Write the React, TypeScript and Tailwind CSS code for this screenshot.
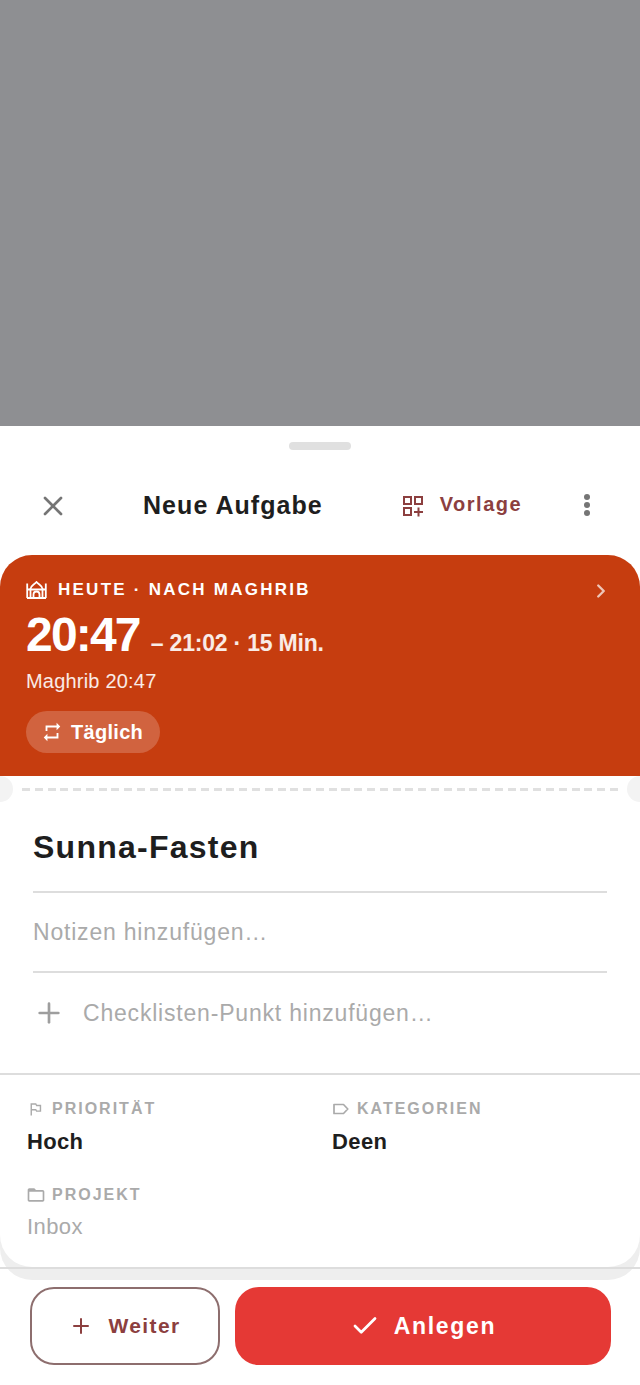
import { X, ChevronRight, Plus, Check } from 'lucide-react'

function TemplateIcon() {
  return (
    <svg width="22" height="22" viewBox="0 0 22 22" fill="none" stroke="#8c3f3f" strokeWidth="2">
      <rect x="2" y="2" width="7" height="7" />
      <rect x="13" y="2" width="7" height="7" />
      <rect x="2" y="13" width="7" height="7" />
      <path d="M16.500 12.500v9M12 17h9" />
    </svg>
  )
}

function MosqueIcon() {
  return (
    <svg width="21" height="18" viewBox="0 0 21 18" fill="none" stroke="white" strokeWidth="1.8">
      <path d="M1.200 17V2.500M19.800 17V2.500M1 17h19" />
      <path d="M1.200 8.500h3.300M16.500 8.500h3.300" />
      <path d="M4.500 17V8.500h12V17" />
      <path d="M4.500 8.500C4 4.800 8 4 10.500 1 13 4 17 4.800 16.500 8.500" />
      <path d="M7.500 17v-3.500a3 3 0 0 1 6 0V17" />
    </svg>
  )
}

function RepeatIcon() {
  return (
    <svg width="22" height="22" viewBox="0 0 24 24" fill="white">
      <path d="M7 7h10v3l4-4-4-4v3H5v6h2V7zm10 10H7v-3l-4 4 4 4v-3h12v-6h-2v4z" />
    </svg>
  )
}

function FlagIcon() {
  return (
    <svg width="18" height="18" viewBox="0 0 24 24" fill="#aaaaaa">
      <path d="M14 6l-1-2H5v17h2v-7h5l1 2h7V6h-6zm4 8h-4l-1-2H7V6h5l1 2h5v6z" />
    </svg>
  )
}

function FolderIcon() {
  return (
    <svg width="20" height="20" viewBox="0 0 24 24" fill="#aaaaaa" className="shrink-0">
      <path d="M20 6h-8l-2-2H4c-1.100 0-1.990.9-1.990 2L2 18c0 1.100.9 2 2 2h16c1.100 0 2-.9 2-2V8c0-1.100-.9-2-2-2zm0 12H4V8h16v10z" />
    </svg>
  )
}

function TagIcon() {
  return (
    <svg width="16" height="12" viewBox="0 0 16 12" fill="none" stroke="#aaaaaa" strokeWidth="1.7">
      <path d="M1 1.500h9.500L14.800 6l-4.300 4.500H1z" strokeLinejoin="round" />
    </svg>
  )
}

function DotsIcon() {
  return (
    <svg width="32" height="32" viewBox="0 0 32 32" fill="#757575">
      <circle cx="16" cy="8" r="3" />
      <circle cx="16" cy="16" r="3" />
      <circle cx="16" cy="24" r="3" />
    </svg>
  )
}

function MetaLabel({ icon, label }: { icon: React.ReactNode; label: string }) {
  return (
    <div className="flex items-center gap-[8px] h-[20px] text-[16px] font-bold tracking-[2px] text-[#aaaaaa]">
      <span className="w-[17px] flex justify-center">{icon}</span>
      {label}
    </div>
  )
}

export default function App() {
  return (
    <div className="h-[1385px] bg-white flex flex-col overflow-hidden font-['Liberation_Sans',Arial,sans-serif] text-[#1e1e1e]">
      <div className="h-[426px] shrink-0 bg-[#8e8f92]" />

      <div className="flex justify-center pt-[16px]">
        <div className="w-[62px] h-[8px] rounded-full bg-[#e0e0e0]" />
      </div>

      {/* Header */}
      <header className="h-[105px] flex items-center px-[37px] pt-[7px]">
        <X size={32} strokeWidth={2} className="text-[#757575]" />
        <h1 className="ml-[74px] text-[25px] font-bold tracking-[1.05px]">Neue Aufgabe</h1>
        <div className="ml-[79px] flex items-center">
          <TemplateIcon />
          <span className="ml-[16px] -mt-[4px] text-[20px] font-bold tracking-[1.5px] text-[#8c3f3f]">Vorlage</span>
        </div>
        <span className="ml-auto -mt-[2px]">
          <DotsIcon />
        </span>
      </header>

      {/* Time card */}
      <section className="h-[221px] shrink-0 rounded-t-[32px] bg-[#c63d0f] text-white pl-[26px] pr-[28px] pt-[23px]">
        <div className="flex items-center h-[24px]">
          <MosqueIcon />
          <span className="ml-[11px] text-[17px] font-bold tracking-[2.25px]">HEUTE · NACH MAGHRIB</span>
          <span className="ml-auto mt-[2px]">
            <ChevronRight size={22} strokeWidth={2.6} className="text-white/70" />
          </span>
        </div>
        <div className="flex items-baseline mt-[6px] h-[54px]">
          <span className="text-[48px] leading-[54px] font-bold tracking-[-1.8px]">20:47</span>
          <span className="ml-[11px] text-[23px] font-bold text-white/90 tracking-[-0.2px]">– 21:02 · 15 Min.</span>
        </div>
        <div className="mt-[5px] text-[20px] leading-[28px] text-white/90 tracking-[0.2px]">Maghrib 20:47</div>
        <div className="mt-[16px] inline-flex items-center h-[42px] rounded-full bg-white/20 pl-[15px] pr-[17px]">
          <RepeatIcon />
          <span className="ml-[8px] text-[20px] font-bold tracking-[0.3px]">Täglich</span>
        </div>
      </section>

      {/* Body card */}
      <div className="flex-1 min-h-0">
        <div className="bg-[#eeeeee] rounded-b-[32px] pb-[13px]">
          <div className="relative bg-white rounded-b-[32px] h-[491px]">
            <div className="absolute left-[-13px] top-[0px] w-[26px] h-[26px] rounded-full bg-[#f3f3f3]" />
            <div className="absolute right-[-13px] top-[0px] w-[26px] h-[26px] rounded-full bg-[#f3f3f3]" />

            <div className="mx-[22px] h-[26px] flex items-center">
              <div className="w-full h-[3px] bg-[repeating-linear-gradient(90deg,#e0e0e0_0_8px,transparent_8px_12.78px)]" />
            </div>

            <div className="px-[33px]">
              <div className="h-[91px] flex items-center border-b-2 border-[#dddddd] text-[32px] font-bold tracking-[1.25px]">
                Sunna-Fasten
              </div>
              <div className="h-[80px] flex items-center border-b-2 border-[#dddddd] text-[23px] tracking-[0.8px] text-[#aaaaaa]">
                Notizen hinzufügen…
              </div>
              <div className="h-[80px] flex items-center text-[23px] tracking-[0.8px] text-[#aaaaaa]">
                <Plus size={32} strokeWidth={2} className="text-[#9e9e9e]" />
                <span className="ml-[18px]">Checklisten-Punkt hinzufügen…</span>
              </div>
            </div>

            <div className="border-t-2 border-[#dddddd] mt-[20px] pl-[27px] pt-[24px] grid grid-cols-[305px_1fr] gap-y-[28px]">
              <div>
                <MetaLabel icon={<FlagIcon />} label="PRIORITÄT" />
                <div className="mt-[8px] text-[22px] leading-[30px] font-bold tracking-[0.3px]">Hoch</div>
              </div>
              <div>
                <MetaLabel icon={<TagIcon />} label="KATEGORIEN" />
                <div className="mt-[8px] text-[22px] leading-[30px] font-bold tracking-[0.4px]">Deen</div>
              </div>
              <div>
                <MetaLabel icon={<FolderIcon />} label="PROJEKT" />
                <div className="mt-[7px] text-[22px] leading-[30px] tracking-[0.4px] text-[#aaaaaa]">Inbox</div>
              </div>
            </div>

            {/* footer separator over the card's edge */}
            <div className="absolute left-0 right-0 bottom-[-2px] h-[2px] bg-[#dddddd]" />
          </div>
        </div>

        {/* Actions */}
        <div className="flex gap-[15px] pl-[30px] pr-[29px] pt-[7px]">
          <button className="w-[190px] h-[78px] flex items-center justify-center rounded-[24px] border-2 border-[#8d6e6e] bg-white text-[#8c3f3f]">
            <Plus size={24} strokeWidth={2} />
            <span className="ml-[15px] text-[21px] font-bold tracking-[1.4px]">Weiter</span>
          </button>
          <button className="flex-1 h-[78px] flex items-center justify-center rounded-[24px] bg-[#e53935] text-white">
            <Check size={30} strokeWidth={2.2} />
            <span className="ml-[14px] text-[23px] font-bold tracking-[1.7px]">Anlegen</span>
          </button>
        </div>
      </div>
    </div>
  )
}
